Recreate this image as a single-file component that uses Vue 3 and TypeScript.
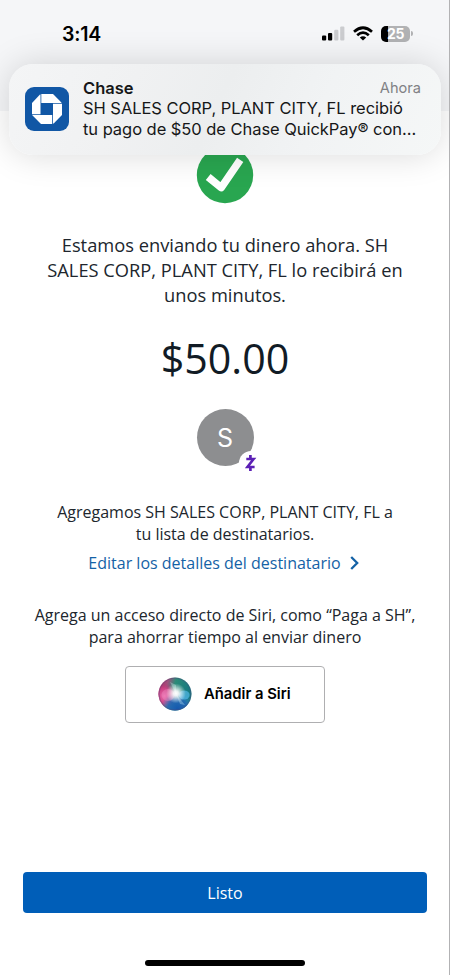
<script setup lang="ts">
const message: string[] = ['Estamos enviando tu dinero ahora. SH', 'SALES CORP, PLANT CITY, FL lo recibirá en', 'unos minutos.']
const added: string[] = ['Agregamos SH SALES CORP, PLANT CITY, FL a', 'tu lista de destinatarios.']
const siri: string[] = ['Agrega un acceso directo de Siri, como “Paga a SH”,', 'para ahorrar tiempo al enviar dinero']
const alertLines: string[] = ['SH SALES CORP, PLANT CITY, FL recibió', 'tu pago de $50 de Chase QuickPay® con...']
</script>

<template>
  <main class="screen">
    <header class="status">
      <span class="time">3:14</span>
      <div class="indicators">
        <svg class="signal" width="23" height="15" viewBox="0 0 23 15">
          <rect x="0" y="9.4" width="4.2" height="5.1" rx="1.1" />
          <rect x="6" y="7" width="4.2" height="7.5" rx="1.1" />
          <rect x="12.2" y="3.8" width="4.2" height="10.7" rx="1.1" fill="#cbcccf" />
          <rect x="18.2" y="0.5" width="4.2" height="14" rx="1.1" fill="#cbcccf" />
        </svg>
        <svg class="wifi" width="20" height="15" viewBox="0 0 20 15" fill="none" stroke="#000" stroke-width="2.7">
          <path d="M1 5.7Q10-2.2 19 5.7" />
          <path d="M4.2 9.3Q10 4.1 15.8 9.3" />
          <path d="M6.8 11.5Q10 9 13.2 11.5L10 14.6Z" fill="#000" stroke="none" />
        </svg>
        <div class="battery"><span>25</span></div>
        <i class="battery-tip"></i>
      </div>
    </header>

    <section class="content">
      <svg class="check" width="58" height="58" viewBox="0 0 58 58">
        <circle cx="29" cy="29" r="28.2" fill="#29a650" />
        <path d="M12.2 31 25.2 41.6 44.2 13.8" fill="none" stroke="#fff" stroke-width="7.6" stroke-linejoin="round" />
      </svg>
      <p class="message"><span v-for="line in message" :key="line">{{ line }}</span></p>
      <div class="amount">$50.00</div>
      <div class="avatar">
        S
        <span class="badge">
          <svg width="12" height="18" viewBox="0 0 12 18" fill="none" stroke="#5b1fb5" stroke-width="2.7">
            <path d="M1.3 5H8.6L2.4 13H9.6M5.4 1V5M5.4 13V17" />
          </svg>
        </span>
      </div>
      <p class="copy added"><span v-for="line in added" :key="line">{{ line }}</span></p>
      <a class="edit">
        <span>Editar los detalles del destinatario</span>
        <svg width="9" height="14" viewBox="0 0 9 14" fill="none" stroke="#1462a6" stroke-width="2.3"><path d="M1.2 1 7.2 7 1.2 13" /></svg>
      </a>
      <p class="copy siri-copy"><span v-for="line in siri" :key="line">{{ line }}</span></p>
      <button class="siri">
        <svg width="34" height="34" viewBox="0 0 34 34">
          <defs>
            <linearGradient id="base" x1="0" y1=".25" x2=".9" y2=".5">
              <stop offset="0" stop-color="#b92b69" /><stop offset=".25" stop-color="#a0507c" /><stop offset=".5" stop-color="#2c8b78" /><stop offset="1" stop-color="#167a80" />
            </linearGradient>
            <radialGradient id="pink" cx=".18" cy=".56" r=".38"><stop offset="0" stop-color="#ed72b2" /><stop offset=".6" stop-color="#d64188" stop-opacity=".8" /><stop offset="1" stop-color="#bc2c6e" stop-opacity="0" /></radialGradient>
            <radialGradient id="blue" cx=".58" cy=".95" r=".5"><stop offset="0" stop-color="#1558ae" /><stop offset=".6" stop-color="#2669b9" stop-opacity=".85" /><stop offset="1" stop-color="#3f9bd2" stop-opacity="0" /></radialGradient>
            <radialGradient id="glow" cx=".53" cy=".48" r=".3"><stop offset="0" stop-color="#fff" /><stop offset=".25" stop-color="#fff" stop-opacity=".9" /><stop offset="1" stop-color="#fff" stop-opacity="0" /></radialGradient>
          </defs>
          <circle cx="17" cy="17" r="16.5" fill="url(#base)" />
          <circle cx="17" cy="17" r="16.5" fill="url(#pink)" />
          <circle cx="17" cy="17" r="16.5" fill="url(#blue)" />
          <ellipse cx="26.2" cy="18" rx="5.5" ry="4.5" fill="#52b9e8" opacity=".7" />
          <ellipse cx="10" cy="18" rx="6.5" ry="6" fill="#f18bc1" opacity=".4" />
          <path d="M18 17 27 28 22 27ZM18 17 12 5 18 8Z" fill="#dff" opacity=".3" />
          <circle cx="17" cy="17" r="16.5" fill="url(#glow)" />
          <circle cx="17" cy="17" r="16" fill="none" stroke="#4d4979" stroke-opacity=".45" />
        </svg>
        <span>Añadir a Siri</span>
      </button>
      <button class="done">Listo</button>
      <div class="home"></div>
    </section>

    <aside class="alert">
      <svg class="logo" width="44" height="44" viewBox="0 0 44 44">
        <rect width="44" height="44" rx="9" fill="#1157a5" />
        <g fill="#fff">
          <path d="M16.3 7H28L36.4 15.5V16H16.3Z" />
          <path d="M37 16.8V28L28.7 36.4H28V16.8Z" />
          <path d="M27.2 37H16L7.6 28.6V28H27.2Z" />
          <path d="M7 27.2V16L15 7.6H15.5V27.2Z" />
        </g>
      </svg>
      <div class="alert-text">
        <div class="alert-head"><strong>Chase</strong><time>Ahora</time></div>
        <p><span v-for="line in alertLines" :key="line">{{ line }}</span></p>
      </div>
    </aside>
  </main>
</template>

<style>
body { margin: 0; }
</style>

<style scoped>
* { box-sizing: border-box; }
p { margin: 0; }
p span { display: block; white-space: nowrap; }
button { padding: 0; font: inherit; }
.screen { position: relative; width: 450px; height: 975px; overflow: hidden; background: #fff; border-right: 1px solid #b2b2b4; font-family: "Open Sans", sans-serif; color: #20262d; }
.status { display: flex; justify-content: space-between; height: 111px; padding: 22px 36px 0 62px; background: #f5f6f8; font-family: Inter, sans-serif; color: #000; }
.time { height: 24px; font-size: 19.5px; line-height: 24px; font-weight: 600; letter-spacing: -.2px; }
.indicators { display: flex; align-items: center; height: 23px; }
.wifi { margin-left: 8px; }
.battery { width: 29px; height: 16px; margin-left: 8px; border-radius: 5px; background: linear-gradient(90deg, #000 7px, #b1b2b4 7px); color: #fff; text-align: center; font-size: 14px; line-height: 16px; font-weight: 700; letter-spacing: -.3px; }
.battery-tip { width: 2px; height: 5px; margin-left: 1px; border-radius: 0 3px 3px 0; background: #b1b2b4; }
.content { display: flex; flex-direction: column; align-items: center; width: 450px; padding-top: 35px; }
.check { display: block; }
.message { margin-top: 28px; text-align: center; font-size: 18.3px; line-height: 25px; }
.amount { margin-top: 21px; font-size: 41.2px; line-height: 60px; color: #111b25; }
.avatar { position: relative; width: 57px; height: 57px; margin-top: 21px; border-radius: 50%; background: #8d8e90; color: #fff; font: 25px/59px Inter, sans-serif; text-align: center; }
.badge { position: absolute; left: 42px; top: 42px; display: flex; align-items: center; justify-content: center; width: 24px; height: 24px; border-radius: 50%; background: #fff; }
.copy { text-align: center; font-size: 16px; line-height: 22px; }
.added { margin-top: 35px; }
.edit { display: flex; align-items: center; height: 22px; margin: 7px 3px 0 0; gap: 9px; color: #1462a6; font-size: 16px; line-height: 22px; white-space: nowrap; }
.siri-copy { margin-top: 30px; }
.siri { display: flex; align-items: center; width: 200px; height: 57px; margin-top: 18px; padding-left: 32px; gap: 12px; border: 1px solid #afafb1; border-radius: 4px; background: #fff; color: #000; font: 600 14.8px/20px Inter, sans-serif; white-space: nowrap; }
.siri svg, .siri span { margin-top: -1px; }
.done { width: 404px; height: 41px; margin-top: 149px; border: 0; border-radius: 4px; background: #005eb8; color: #fff; font-size: 16px; font-weight: 500; }
.home { width: 160px; height: 6px; margin-top: 47px; border-radius: 3px; background: #000; }
.alert { position: absolute; top: 64px; left: 9px; display: flex; width: 432px; height: 91px; padding: 23px 20px 0 16px; gap: 14px; border-radius: 24px; background: linear-gradient(115deg, #f4f5f6 0%, #f0f1f2 28%, #eceeef 48%, #f1f3f4 70%, #f5f7f7 100%); box-shadow: 0 0 34px rgba(0, 0, 0, .15); font-family: Inter, sans-serif; color: #161718; }
.logo { flex: none; }
.alert-text { flex: 1; margin-top: -10px; }
.alert-head { display: flex; justify-content: space-between; height: 21px; font-size: 16.5px; line-height: 22px; }
.alert-head strong { font-weight: 600; }
.alert-head time { font-size: 14.6px; line-height: 23px; color: #808184; }
.alert p { font-size: 16.5px; line-height: 20.5px; letter-spacing: -.05px; }
</style>
